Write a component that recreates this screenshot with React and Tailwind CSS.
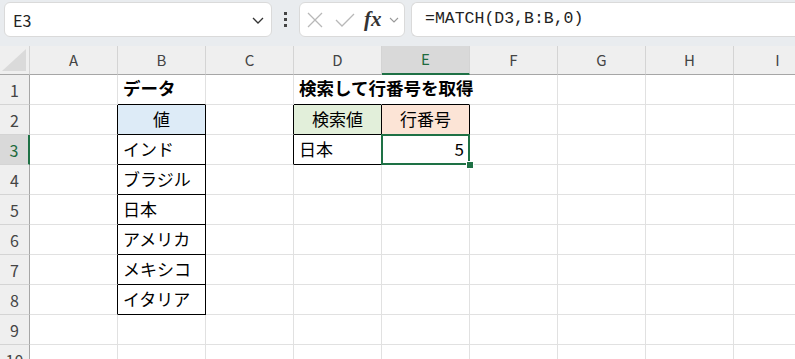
import React from 'react';

const COLS = ['A', 'B', 'C', 'D', 'E', 'F', 'G', 'H', 'I'];
const ROWS = [1, 2, 3, 4, 5, 6, 7, 8, 9, 10];

// cell contents keyed by address
const cells = {
  B1: { text: 'データ', bold: true },
  D1: { text: '検索して行番号を取得', bold: true, spill: true },
  B2: { text: '値', center: true, bg: 'bg-[#ddebf7]' },
  B3: { text: 'インド' },
  B4: { text: 'ブラジル' },
  B5: { text: '日本' },
  B6: { text: 'アメリカ' },
  B7: { text: 'メキシコ' },
  B8: { text: 'イタリア' },
  D2: { text: '検索値', center: true, bg: 'bg-[#e2efda]' },
  E2: { text: '行番号', center: true, bg: 'bg-[#fce4d6]' },
  D3: { text: '日本' },
  E3: { text: '5', right: true, selected: true },
};

// ranges with thin black borders
const boxed = (c, r) =>
  (c === 'B' && r >= 2 && r <= 8) || ((c === 'D' || c === 'E') && (r === 2 || r === 3));

// gridlines hidden under the overflowing title text
const hiddenRight = (addr) => addr === 'D1' || addr === 'E1';

const Toolbar = () => (
  <div className="h-[46px] bg-[#e9ecef] flex items-start pt-[2px] pl-[4px] gap-0">
    <div className="w-[268px] h-[35px] bg-white rounded-[6px] border border-[#dadada] flex items-center justify-between pl-[8px] pr-[6px]">
      <span className="text-[16px] text-[#222]">E3</span>
      <svg width="14" height="14" viewBox="0 0 14 14" className="text-[#333]">
        <path d="M2 5 L7 10 L12 5" fill="none" stroke="currentColor" strokeWidth="1.3" />
      </svg>
    </div>
    <div className="w-[27px] h-[35px] flex flex-col items-center justify-center gap-[3px]">
      <span className="w-[3px] h-[3px] bg-[#444]" />
      <span className="w-[3px] h-[3px] bg-[#444]" />
      <span className="w-[3px] h-[3px] bg-[#444]" />
    </div>
    <div className="w-[106px] h-[35px] bg-white rounded-[6px] border border-[#dadada] flex items-center pl-[6px] gap-[6px]">
      <svg width="18" height="18" viewBox="0 0 18 18" className="text-[#b8b8b8]">
        <path d="M2 2 L16 16 M16 2 L2 16" fill="none" stroke="currentColor" strokeWidth="1.3" />
      </svg>
      <svg width="22" height="18" viewBox="0 0 22 18" className="text-[#b8b8b8] ml-[4px]">
        <path d="M2 9 L8 15 L20 3" fill="none" stroke="currentColor" strokeWidth="1.3" />
      </svg>
      <span className="font-['Liberation_Serif',serif] italic font-bold text-[21px] text-[#333] leading-none ml-[2px]">fx</span>
      <svg width="12" height="12" viewBox="0 0 12 12" className="text-[#999]">
        <path d="M2 4 L6 8 L10 4" fill="none" stroke="currentColor" strokeWidth="1.1" />
      </svg>
    </div>
    <div className="ml-[6px] flex-1 h-[35px] bg-white rounded-l-[6px] border border-r-0 border-[#dadada] flex items-center pl-[13px]">
      <span className="font-['Liberation_Mono',monospace] text-[16.5px] text-[#222]">=MATCH(D3,B:B,0)</span>
    </div>
  </div>
);

const HeaderRow = () => (
  <>
    <div className="h-[29px] bg-[#efefef] border-r border-b border-r-[#d4d4d4] border-b-[#a6a6a6] relative">
      <svg width="24" height="22" viewBox="0 0 24 22" className="absolute right-[3px] bottom-[3px]">
        <path d="M0 22 L24 22 L24 0 Z" fill="#dadada" />
      </svg>
    </div>
    {COLS.map((c) =>
      c === 'E' ? (
        <div key={c} className="h-[29px] bg-[#d9d9d9] border-r border-r-[#d4d4d4] border-b-2 border-b-[#1e7145] flex items-center justify-center text-[15px] text-[#1e6b3e]">
          {c}
        </div>
      ) : (
        <div key={c} className="h-[29px] bg-[#efefef] border-r border-b border-r-[#d4d4d4] border-b-[#a6a6a6] flex items-center justify-center text-[15px] text-[#444]">
          {c}
        </div>
      )
    )}
  </>
);

const Cell = ({ c, r }) => {
  const addr = c + r;
  const data = cells[addr];
  const ci = COLS.indexOf(c);
  const right = COLS[ci + 1];
  const blackR = boxed(c, r) || (right && boxed(right, r));
  const blackB = boxed(c, r) || boxed(c, r + 1);
  return (
    <div
      className={[
        'h-[30px] border-r border-b relative flex items-end pb-[3px] px-[5px] whitespace-nowrap text-black',
        hiddenRight(addr) ? 'border-r-white' : blackR ? 'border-r-black' : 'border-r-[#e1e1e1]',
        blackB ? 'border-b-black' : 'border-b-[#e1e1e1]',
        data?.spill || data?.selected ? 'z-10' : '',
        data?.bg || '',
        data?.bold ? 'font-bold text-[17.5px]' : 'text-[17px]',
        data?.center ? 'justify-center text-[#333]' : '',
        data?.right ? 'justify-end' : '',
      ].join(' ')}
    >
      {data?.text}
      {data?.selected && (
        <>
          <div className="absolute -left-px -top-px -right-px -bottom-px border-2 border-[#1e7145] pointer-events-none" />
          <div className="absolute -right-[5px] -bottom-[5px] w-[8px] h-[8px] bg-[#1e7145] border border-white" />
        </>
      )}
    </div>
  );
};

export default function App() {
  return (
    <div className="w-[795px] h-[359px] overflow-hidden bg-white font-['Noto_Sans_CJK_JP','Noto_Sans',sans-serif]">
      <Toolbar />
      <div className="grid grid-cols-[30px_repeat(9,88px)] w-[822px]">
        <HeaderRow />
        {ROWS.map((r) => (
          <React.Fragment key={r}>
            {r === 3 ? (
              <div className="h-[30px] bg-[#d9d9d9] border-b border-b-[#d4d4d4] border-r-2 border-r-[#1e7145] flex items-center justify-center text-[16px] text-[#1e6b3e]">
                {r}
              </div>
            ) : (
              <div className="h-[30px] bg-[#efefef] border-r border-b border-r-[#a6a6a6] border-b-[#d4d4d4] flex items-center justify-center text-[16px] text-[#444]">
                {r}
              </div>
            )}
            {COLS.map((c) => (
              <Cell key={c} c={c} r={r} />
            ))}
          </React.Fragment>
        ))}
      </div>
    </div>
  );
}
